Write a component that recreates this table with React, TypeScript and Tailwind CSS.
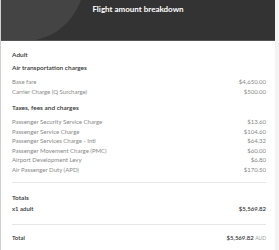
import React from "react";

const rows1 = [
  ["Base fare", "$4,650.00"],
  ["Carrier Charge (Q Surcharge)", "$500.00"],
];
const rows2 = [
  ["Passenger Security Service Charge", "$13.60"],
  ["Passenger Service Charge", "$104.60"],
  ["Passenger Services Charge - Intl", "$64.32"],
  ["Passenger Movement Charge (PMC)", "$60.00"],
  ["Airport Development Levy", "$6.80"],
  ["Air Passenger Duty (APD)", "$170.50"],
];

export default function App() {
  return (
    <div
      className="w-[279px] h-[250px] bg-[#f4f4f4] flex overflow-hidden"
      style={{ fontFamily: "Lato, 'Noto Sans', sans-serif" }}
    >
      <div className="w-[275px] h-full bg-white border-l border-[#d0d0d0] flex flex-col">
        <div className="relative h-[41px] shrink-0 bg-[#333333] border-b border-[#555] overflow-hidden flex justify-center">
          <svg className="absolute left-0 top-0" width="100" height="41" viewBox="0 0 100 41">
            <path d="M0 0 L80 0 C72 20 58 36 30 41 L0 41 Z" fill="#444444" />
          </svg>
          <div className="relative text-white text-[8px] font-bold leading-none pt-[5px]">
            Flight amount breakdown
          </div>
        </div>
        <div className="pl-[11px] pr-[9px] text-[#333]">
          <div className="text-[6.5px] font-semibold mt-[10px] leading-[8px]">Adult</div>
          <div className="text-[6.5px] font-semibold mt-[5px] leading-[8px]">Air transportation charges</div>
          <div className="mt-[5px] flex flex-col">
            {rows1.map(([l, v]) => (
              <div key={l} className="flex justify-between text-[6px] text-[#888] leading-[10px]">
                <span>{l}</span>
                <span>{v}</span>
              </div>
            ))}
          </div>
          <div className="text-[6.5px] font-semibold mt-[7px] leading-[8px]">Taxes, fees and charges</div>
          <div className="mt-[5px] flex flex-col">
            {rows2.map(([l, v]) => (
              <div key={l} className="flex justify-between text-[6px] text-[#888] leading-[9.5px]">
                <span>{l}</span>
                <span>{v}</span>
              </div>
            ))}
          </div>
          <div className="border-t border-[#e6e6e6] mt-[8px]" />
          <div className="text-[6.5px] font-semibold mt-[11px] leading-[8px]">Totals</div>
          <div className="flex justify-between text-[6px] font-semibold mt-[3px] leading-[8px]">
            <span>x1 adult</span>
            <span>$5,569.82</span>
          </div>
          <div className="border-t border-[#e6e6e6] mt-[11px]" />
          <div className="flex justify-between text-[6px] font-semibold mt-[9px] leading-[8px]">
            <span>Total</span>
            <span>
              $5,569.82 <span className="font-normal text-[#999] text-[5px]">AUD</span>
            </span>
          </div>
        </div>
      </div>
    </div>
  );
}
